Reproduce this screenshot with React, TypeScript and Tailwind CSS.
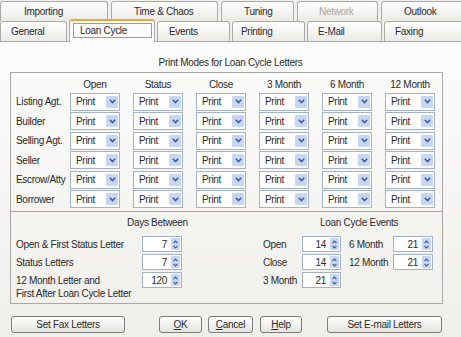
import { Fragment } from 'react';

const COLS = ['Open', 'Status', 'Close', '3 Month', '6 Month', '12 Month'];
const ROWS = ['Listing Agt.', 'Builder', 'Selling Agt.', 'Seller', 'Escrow/Atty', 'Borrower'];

function Drop() {
  return (
    <div className="h-[18px] border border-[#a4b2c9] bg-white flex items-center pl-[5px] pr-[1px]">
      <span className="flex-1">Print</span>
      <div className="w-[12px] h-[12px] bg-[#c7d6f3] rounded-[1px] flex items-center justify-center">
        <svg width="7" height="5" viewBox="0 0 7 5">
          <path d="M0.8 0.8 L3.5 3.6 L6.2 0.8" fill="none" stroke="#3a5c9c" strokeWidth="1.5" />
        </svg>
      </div>
    </div>
  );
}

function Spin({ v, w }: { v: number; w: string }) {
  return (
    <div className={`${w} h-[16px] border border-[#a4b2c9] bg-white flex items-center justify-end pr-[1px]`}>
      <span className="pr-[4px]">{v}</span>
      <div className="w-[9px] h-[12px] bg-[#c7d6f3] rounded-[1px] flex items-center justify-center">
        <svg width="5" height="9" viewBox="0 0 5 9">
          <path d="M0.6 3 L2.5 1.1 L4.4 3 M0.6 6 L2.5 7.9 L4.4 6" fill="none" stroke="#3a5c9c" strokeWidth="1.1" />
        </svg>
      </div>
    </div>
  );
}

function Tab({ label, w, pl, disabled }: { label: string; w: string; pl: string; disabled?: boolean }) {
  return (
    <div
      className={`${w} ${pl} h-full shrink-0 border-t border-x border-[#a9a9a9] rounded-t-[3px] bg-linear-to-b from-white to-[#ebeae5] flex items-center ${
        disabled ? 'text-[#a8a8a8]' : ''
      }`}
    >
      {label}
    </div>
  );
}

function Btn({ w, children }: { w: string; children: React.ReactNode }) {
  return (
    <div className={`${w} h-[17px] border border-[#7c7c7c] rounded-[3px] bg-linear-to-b from-white to-[#e6e5df] flex items-center justify-center`}>
      {children}
    </div>
  );
}

export default function App() {
  return (
    <div className="w-[461px] h-[337px] overflow-hidden bg-[#f1f0ec] text-[10px] leading-[13px] tracking-[-0.3px] text-[#2a2a2a] font-['Liberation_Sans',Arial,sans-serif]">
      {/* tab rows */}
      <div className="flex gap-[3px] h-[20px] mt-[1px]">
        <Tab label="Importing" w="w-[108px]" pl="pl-[23px]" />
        <Tab label="Time & Chaos" w="w-[107px]" pl="pl-[22px]" />
        <Tab label="Tuning" w="w-[73px]" pl="pl-[22px]" />
        <Tab label="Network" w="w-[81px]" pl="pl-[21px]" disabled />
        <Tab label="Outlook" w="w-[90px]" pl="pl-[22px]" />
      </div>
      <div className="flex items-end gap-[2px] h-[21px] border-b border-[#a9a9a9]">
        <Tab label="General" w="w-[67px]" pl="pl-[10px]" />
        <div className="relative z-10 w-[86px] h-[23px] -mb-[1px] shrink-0 border-x border-[#a9a9a9] rounded-t-[3px] border-t-2 border-t-[#eea83a] bg-[#fcfcfc] pl-[3px] pr-[2px] pt-[2px] pb-[3px]">
          <div className="h-[15px] border border-[#9c9c9c] pl-[6px] flex items-center">Loan Cycle</div>
        </div>
        <Tab label="Events" w="w-[73px]" pl="pl-[11px]" />
        <Tab label="Printing" w="w-[73px]" pl="pl-[8px]" />
        <Tab label="E-Mail" w="w-[75px]" pl="pl-[10px]" />
        <Tab label="Faxing" w="w-[90px]" pl="pl-[10px]" />
      </div>

      {/* panel */}
      <div className="h-[295px] bg-linear-to-b from-[#fcfcfc] to-[#f0efea] pt-[14px]">
        <div className="text-center">Print Modes for Loan Cycle Letters</div>

        <div className="mt-[3px] ml-[10px] w-[433px] border border-[#a8a8a8]">
          {/* print modes grid */}
          <div className="pl-[5px] pt-[5px] pb-[3px] grid grid-cols-[41px_repeat(6,50px)] gap-x-[13px] gap-y-[1.5px]">
            <div />
            {COLS.map(c => (
              <div key={c} className="text-center h-[13px]">{c}</div>
            ))}
            {ROWS.map(r => (
              <Fragment key={r}>
                <div className="whitespace-nowrap flex items-center h-[18px]">{r}</div>
                {COLS.map(c => (
                  <Drop key={c} />
                ))}
              </Fragment>
            ))}
          </div>

          {/* days between / loan cycle events */}
          <div className="border-t border-[#a8a8a8] flex pt-[4px] pb-[3px]">
            <div className="w-[252px] pl-[5px]">
              <div className="pl-[111px]">Days Between</div>
              <div className="mt-[7px] flex flex-col gap-[2px]">
                <div className="flex items-center">
                  <div className="w-[126px]">Open &amp; First Status Letter</div>
                  <Spin v={7} w="w-[40px]" />
                </div>
                <div className="flex items-center">
                  <div className="w-[126px]">Status Letters</div>
                  <Spin v={7} w="w-[40px]" />
                </div>
                <div className="flex items-start">
                  <div className="w-[126px] pt-[2px] whitespace-nowrap">
                    12 Month Letter and
                    <br />
                    First After Loan Cycle Letter
                  </div>
                  <Spin v={120} w="w-[40px]" />
                </div>
              </div>
            </div>

            <div className="flex-1">
              <div className="pl-[57px]">Loan Cycle Events</div>
              <div className="mt-[7px] flex flex-col gap-[2px]">
                <div className="flex items-center">
                  <div className="w-[39px]">Open</div>
                  <Spin v={14} w="w-[39px]" />
                  <div className="ml-[8px] w-[44px]">6 Month</div>
                  <Spin v={21} w="w-[40px]" />
                </div>
                <div className="flex items-center">
                  <div className="w-[39px]">Close</div>
                  <Spin v={14} w="w-[39px]" />
                  <div className="ml-[8px] w-[44px]">12 Month</div>
                  <Spin v={21} w="w-[40px]" />
                </div>
                <div className="flex items-center">
                  <div className="w-[39px]">3 Month</div>
                  <Spin v={21} w="w-[39px]" />
                </div>
              </div>
            </div>
          </div>
        </div>

        {/* buttons */}
        <div className="mt-[12px] ml-[11px] flex">
          <Btn w="w-[114px]">Set Fax Letters</Btn>
          <div className="ml-[34px]">
            <Btn w="w-[43px]">
              <span className="underline">O</span>K
            </Btn>
          </div>
          <div className="ml-[6px]">
            <Btn w="w-[45px]">
              <span className="underline">C</span>ancel
            </Btn>
          </div>
          <div className="ml-[7px]">
            <Btn w="w-[42px]">
              <span className="underline">H</span>elp
            </Btn>
          </div>
          <div className="ml-[25px]">
            <Btn w="w-[115px]">Set E-mail Letters</Btn>
          </div>
        </div>
      </div>
    </div>
  );
}
